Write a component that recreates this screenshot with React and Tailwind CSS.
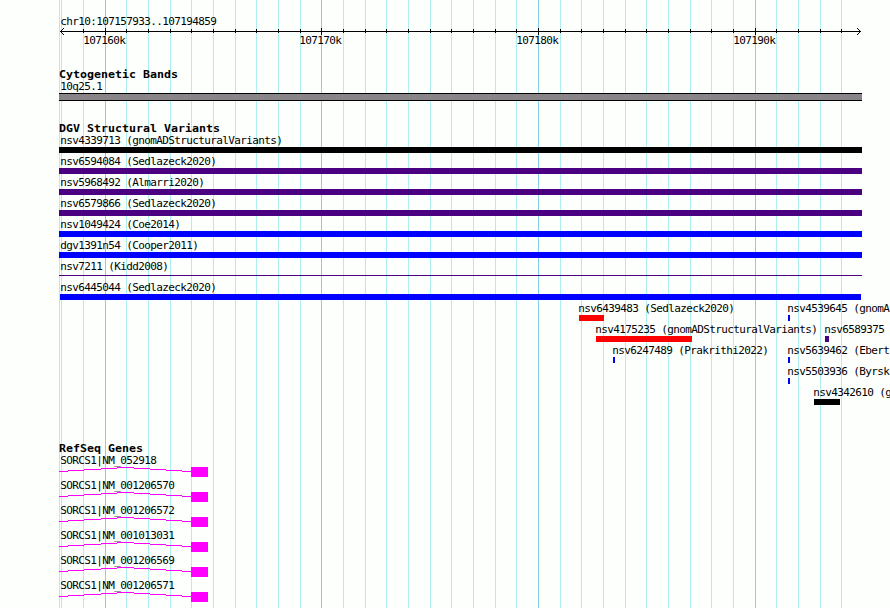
const MINOR = [
  59, 61, 83, 126, 148, 170, 191, 213, 235, 256, 278, 300, 343, 365, 386, 408, 430, 451, 473,
  495, 516, 560, 581, 603, 625, 646, 668, 690, 711, 733, 776, 798, 820, 841,
]

const MAJOR = [
  { x: 105, label: '107160k' },
  { x: 321, label: '107170k' },
  { x: 538, label: '107180k' },
  { x: 755, label: '107190k' },
]

const ROWS = [
  [{ name: 'nsv4339713 (gnomADStructuralVariants)', x: 59, w: 803, color: 'bg-black' }],
  [{ name: 'nsv6594084 (Sedlazeck2020)', x: 59, w: 803, color: 'bg-[#4b0082]' }],
  [{ name: 'nsv5968492 (Almarri2020)', x: 59, w: 803, color: 'bg-[#4b0082]' }],
  [{ name: 'nsv6579866 (Sedlazeck2020)', x: 59, w: 803, color: 'bg-[#4b0082]' }],
  [{ name: 'nsv1049424 (Coe2014)', x: 59, w: 803, color: 'bg-[#0000ff]' }],
  [{ name: 'dgv1391n54 (Cooper2011)', x: 59, w: 803, color: 'bg-[#0000ff]' }],
  [{ name: 'nsv7211 (Kidd2008)', x: 59, w: 803, color: 'bg-[#4b0082]', thin: true }],
  [{ name: 'nsv6445044 (Sedlazeck2020)', x: 60, w: 801, color: 'bg-[#0000ff]' }],
  [
    { name: 'nsv6439483 (Sedlazeck2020)', x: 579, w: 25, color: 'bg-[#ff0000]' },
    { name: 'nsv4539645 (gnomA', x: 788, w: 2, color: 'bg-[#0000ff]' },
  ],
  [
    { name: 'nsv4175235 (gnomADStructuralVariants)', x: 596, w: 96, color: 'bg-[#ff0000]' },
    { name: 'nsv6589375', x: 825, w: 4, color: 'bg-[#4b0082]' },
  ],
  [
    { name: 'nsv6247489 (Prakrithi2022)', x: 613, w: 2, color: 'bg-[#0000ff]' },
    { name: 'nsv5639462 (Ebert', x: 788, w: 2, color: 'bg-[#0000ff]' },
  ],
  [{ name: 'nsv5503936 (Byrsk', x: 788, w: 2, color: 'bg-[#0000ff]' }],
  [{ name: 'nsv4342610 (g', x: 814, w: 26, color: 'bg-black' }],
]

const GENES = ['NM_052918', 'NM_001206570', 'NM_001206572', 'NM_001013031', 'NM_001206569', 'NM_001206571']

function Gridlines() {
  return (
    <svg className="absolute inset-0" width="890" height="608" shapeRendering="crispEdges">
      {MINOR.map(x => <rect key={x} x={x} y="0" width="1" height="608" fill="#afeeee" />)}
      {MAJOR.map(m => <rect key={m.x} x={m.x} y="0" width="1" height="608" fill="#87ceeb" />)}
    </svg>
  )
}

function Ruler() {
  return (
    <svg className="block" width="890" height="8" viewBox="0 27 890 8" shapeRendering="crispEdges">
      <rect x="60" y="31" width="801" height="1" />
      {MINOR.filter(x => x > 61).map(x => <rect key={x} x={x} y="29" width="1" height="4" />)}
      {MAJOR.map(m => <rect key={m.x} x={m.x} y="28" width="1" height="7" />)}
      {[1, 2, 3].map(d => (
        <g key={d}>
          <rect x={60 + d} y={31 - d} width="1" height="1" />
          <rect x={60 + d} y={31 + d} width="1" height="1" />
          <rect x={860 - d} y={31 - d} width="1" height="1" />
          <rect x={860 - d} y={31 + d} width="1" height="1" />
        </g>
      ))}
    </svg>
  )
}

function Label({ children }) {
  return <p className="h-[13px] pl-[0.3px] text-[11px] leading-[13px] tracking-[-0.622px] whitespace-pre">{children}</p>
}

function Title({ children }) {
  return (
    <h2 className="ml-[59px] h-[13px] w-max origin-left scale-x-[1.057] text-[11px] leading-[13px] font-bold whitespace-pre">
      {children}
    </h2>
  )
}

function Variant({ name, x, w, color, thin }) {
  return (
    <div className="col-start-1 row-start-1">
      <div style={{ marginLeft: x < 100 ? 60 : x - 1 }}>
        <Label>{name}</Label>
      </div>
      <div className={`${color} ${thin ? 'mt-[2px] h-px' : 'h-[6px]'}`} style={{ marginLeft: x, width: w }} />
    </div>
  )
}

// Intron line rises to the middle and falls back, one pixel per step
function GeneModel() {
  return (
    <svg className="-mt-px block" width="208" height="12" shapeRendering="crispEdges" fill="#ff00ff">
      <rect x="59" y="5" width="9" height="1" />
      <rect x="68" y="4" width="16" height="1" />
      <rect x="84" y="3" width="17" height="1" />
      <rect x="101" y="2" width="16" height="1" />
      <rect x="117" y="1" width="17" height="1" />
      <rect x="134" y="2" width="16" height="1" />
      <rect x="150" y="3" width="16" height="1" />
      <rect x="166" y="4" width="16" height="1" />
      <rect x="182" y="5" width="9" height="1" />
      <rect x="191" y="1" width="17" height="10" />
    </svg>
  )
}

export default function App() {
  return (
    <div className="relative h-[608px] w-[890px] overflow-hidden bg-[#fcfffc] font-['DejaVu_Sans_Mono',monospace] text-black">
      <Gridlines />
      <main className="relative">
        {/* Position ruler */}
        <section className="pt-[15px]">
          <div className="ml-[60px]">
            <Label>chr10:107157933..107194859</Label>
          </div>
          <div className="-mt-px">
            <Ruler />
          </div>
          <div className="grid">
            {MAJOR.map(m => (
              <div key={m.x} className="col-start-1 row-start-1 -mt-px" style={{ marginLeft: m.x - 22 }}>
                <Label>{m.label}</Label>
              </div>
            ))}
          </div>
        </section>

        <section className="mt-[21px]">
          <Title>Cytogenetic Bands</Title>
          <div className="-mt-px ml-[60px]">
            <Label>10q25.1</Label>
          </div>
          <div className="ml-[59px] h-[8px] w-[803px] border-y border-black bg-[#888488]" />
        </section>

        <section className="mt-[21px]">
          <Title>DGV Structural Variants</Title>
          <div className="-mt-px">
            {ROWS.map(row => (
              <div key={row[0].name} className="grid h-[21px]">
                {row.map(v => <Variant key={v.name} {...v} />)}
              </div>
            ))}
          </div>
        </section>

        <section className="mt-[35px]">
          <Title>RefSeq Genes</Title>
          <div className="-mt-px">
            {GENES.map(id => (
              <div key={id} className="h-[25px]">
                <div className="ml-[60px]">
                  <Label>{`SORCS1|${id}`}</Label>
                </div>
                <GeneModel />
              </div>
            ))}
          </div>
        </section>
      </main>
    </div>
  )
}
